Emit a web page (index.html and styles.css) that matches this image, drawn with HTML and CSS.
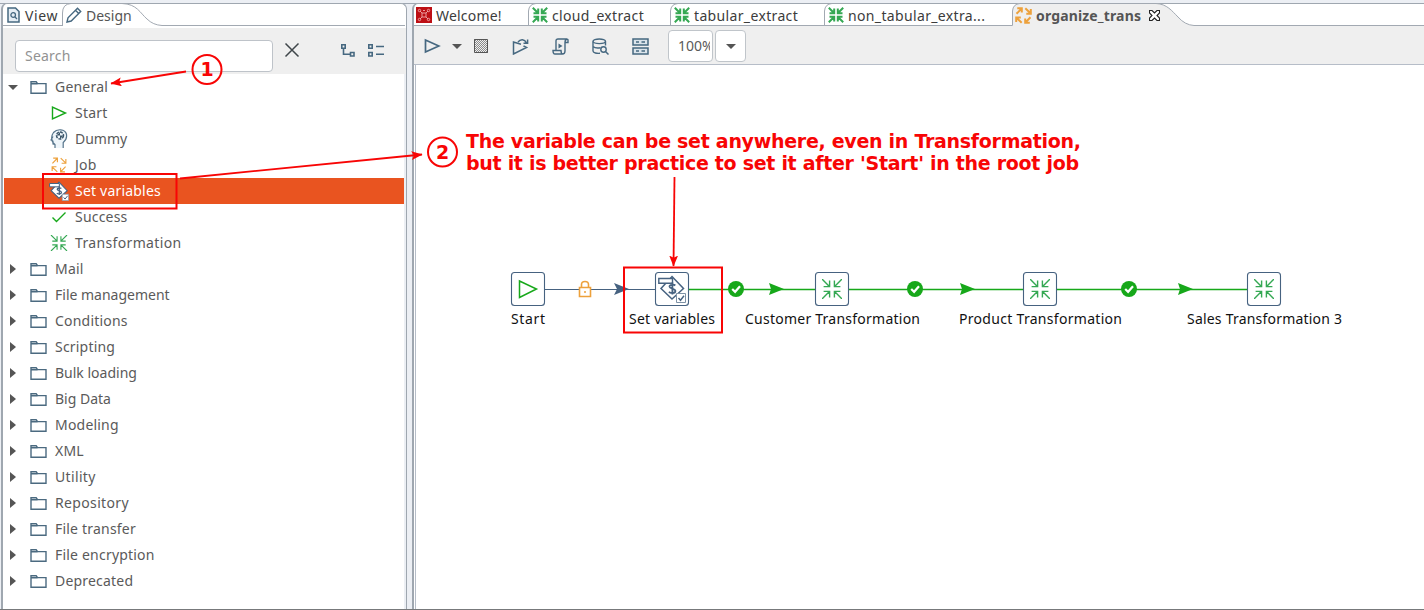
FILE: index.html
```html
<!DOCTYPE html>
<html lang="en">
<head>
<meta charset="utf-8">
<title>organize_trans</title>
<link rel="stylesheet" href="styles.css">
</head>
<body>
<svg class="defs" aria-hidden="true">
  <defs>
    <symbol id="folder" viewBox="0 0 17 15"><path d="M1 13.2V1.8H6.2L7.6 3.6H16V13.2Z M1 3.8H7.6" fill="none" stroke="#4b6a80" stroke-width="1.4"/></symbol>
    <symbol id="play" viewBox="0 0 16 16"><path d="M1.5 2V14L14.5 8Z" fill="none" stroke="currentColor" stroke-width="1.4"/></symbol>
    <symbol id="trans" viewBox="0 0 20 20"><path d="M0 0L7.4 7.4M7.6 1.6V7.6H1.6M20 0L12.6 7.4M12.4 1.6V7.6H18.4M0 20L7.4 12.6M7.6 18.4V12.4H1.6M20 20L12.6 12.6M12.4 18.4V12.4H18.4" fill="none" stroke="currentColor" stroke-width="1.4"/></symbol>
    <symbol id="transbold" viewBox="0 0 16 16"><path d="M.8 .8L5.5 5.5M6.2 1.5V6.2H1.5M15.2 .8L10.5 5.5M9.8 1.5V6.2H14.5M.8 15.2L5.5 10.5M6.2 14.5V9.8H1.5M15.2 15.2L10.5 10.5M9.8 14.5V9.8H14.5" fill="none" stroke="#35a853" stroke-width="2"/></symbol>
    <symbol id="job" viewBox="0 0 17 17"><path d="M1.5 6.8L6.5 1.6M2.3 1.2H6.8V5.6M10.3 1.2L15.5 6.3M15.8 2V6.7H11.3M15.5 10.3L10.4 15.5M14.8 15.8H10.2V11.4M6.7 15.8L1.4 10.7M1.2 15V10.4H5.8" fill="none" stroke="#eda13c" stroke-width="var(--w,1.2)"/></symbol>
    <symbol id="setvar" viewBox="0 0 28 28">
      <path d="M14 1.500L25.500 13.500L14 24L3 13.500Z" fill="#fff" stroke="#466280" stroke-width="1.500"/>
      <path d="M.8 3.500H14.500V8.200H.8Z" fill="#fff" stroke="#466280" stroke-width="1.400"/>
      <path d="M17.300 10.500C16 9.200 11.300 9.500 11.500 11.700C11.800 14 17.400 13.200 17.400 16C17.400 18.800 12 18.500 11 16.800M14.400 7.500V19.500" fill="none" stroke="#466280" stroke-width="1.800"/>
      <path d="M18.500 18.500H27.500V27.500H18.500Z" fill="#fff" stroke="#7d91a5"/><path d="M20.500 23L22.500 25.300L26 20.800" fill="none" stroke="#466280" stroke-width="1.400"/>
    </symbol>
    <symbol id="check" viewBox="0 0 16 16"><circle cx="8" cy="8" r="8" fill="#17a81a"/><path d="M4.2 8L7.1 10.8L12 5.3" fill="none" stroke="#fff" stroke-width="2.2"/></symbol>
    <pattern id="dots" width="2" height="2" patternUnits="userSpaceOnUse"><path d="M0 0H1V1H0ZM1 1H2V2H1Z" fill="#8a8a8a"/></pattern>
    <marker id="head" viewBox="0 0 10 8" refX="9.5" refY="4" markerWidth="11" markerHeight="9" markerUnits="userSpaceOnUse" orient="auto"><path d="M0 0L10 4L0 8L2 4Z" fill="#f80505"/></marker>
  </defs>
</svg>
<div class="app">
  <section class="panel side">
    <div class="tabs">
      <svg class="curve" width="402" height="23"><path d="M59.5 23V10Q59.5 1 68 .5H119C134 1 137 10 144 16Q150 22 159 22.5H402M59.5 22.5H0" fill="none" stroke="#a2a9b2"/></svg>
      <div class="tab view"><svg width="13" height="16" viewBox="0 0 13 16"><path d="M1 1H8.5L12 4.500V15H1Z" fill="#e5edf4" stroke="#466880" stroke-width="1.5"/><circle cx="6.200" cy="8" r="2.300" fill="none" stroke="#466880" stroke-width="1.300"/><path d="M8 10L10 12" stroke="#466880" stroke-width="1.300"/></svg><span>View</span></div>
      <div class="tab design"><svg width="16" height="16" viewBox="0 0 16 16"><path d="M1 15L2 10.800L11.500 1.200L14.700 4.400L5.200 14ZM9.500 3.200L12.700 6.400" fill="none" stroke="#466880" stroke-width="1.400"/></svg><span>Design</span></div>
    </div>
    <div class="search-row">
      <div class="search">Search</div>
      <svg class="clear" width="16" height="16" viewBox="0 0 16 16"><path d="M1.500 1.500L14.500 14.500M14.500 1.500L1.500 14.500" stroke="#3f464a" stroke-width="1.500"/></svg>
      <svg class="expand" width="14" height="13" viewBox="0 0 14 13"><path d="M.8 .8H4.200V4.200H.8ZM9.500 8.500H13V12H9.500ZM2.500 4.500V10.300H9" fill="none" stroke="#466880" stroke-width="1.600"/></svg>
      <svg class="collapse" width="16" height="13" viewBox="0 0 16 13"><path d="M.8 .8H4.200V4.200H.8ZM.8 8.500H4.200V12H.8ZM8 2.500H16M8 10.300H16" fill="none" stroke="#466880" stroke-width="1.600"/></svg>
    </div>
    <div class="tree">
      <div class="row"><i class="tri open"></i><svg class="folder"><use href="#folder"/></svg><span>General</span></div>
      <div class="row child"><svg class="ic green"><use href="#play"/></svg><span>Start</span></div>
      <div class="row child"><svg class="ic dummy" viewBox="0 0 18 20"><path d="M5 19V15.500C1 13 .8 7 3.500 3.500C7-.5 15-.2 16.400 5C17.500 10 15 12 13.200 13.500V19M5 15.500L3 15V12L1 11L3 7.500" fill="#eef5fa" stroke="#55748b" stroke-width="1.200"/><circle cx="10" cy="6.500" r="3.500" fill="none" stroke="#3c566a" stroke-width="1.500" stroke-dasharray="3 1"/><path d="M10 3V6.500H6.500ZM10 6.500H13.500L10 10Z" fill="#3c566a"/></svg><span class="tight">Dummy</span></div>
      <div class="row child"><svg class="ic"><use href="#job"/></svg><span>Job</span></div>
      <div class="row child selected"><svg class="ic var"><use href="#setvar"/></svg><span>Set variables</span></div>
      <div class="row child"><svg class="ic" viewBox="0 0 16 16"><path d="M1.500 8.500L5.500 12.500L14.500 3.500" fill="none" stroke="#17a81a" stroke-width="1.400"/></svg><span>Success</span></div>
      <div class="row child"><svg class="ic lime"><use href="#trans"/></svg><span class="wide">Transformation</span></div>
      <div class="row"><i class="tri"></i><svg class="folder"><use href="#folder"/></svg><span>Mail</span></div>
      <div class="row"><i class="tri"></i><svg class="folder"><use href="#folder"/></svg><span class="tight">File management</span></div>
      <div class="row"><i class="tri"></i><svg class="folder"><use href="#folder"/></svg><span>Conditions</span></div>
      <div class="row"><i class="tri"></i><svg class="folder"><use href="#folder"/></svg><span>Scripting</span></div>
      <div class="row"><i class="tri"></i><svg class="folder"><use href="#folder"/></svg><span class="tight">Bulk loading</span></div>
      <div class="row"><i class="tri"></i><svg class="folder"><use href="#folder"/></svg><span class="tight">Big Data</span></div>
      <div class="row"><i class="tri"></i><svg class="folder"><use href="#folder"/></svg><span>Modeling</span></div>
      <div class="row"><i class="tri"></i><svg class="folder"><use href="#folder"/></svg><span>XML</span></div>
      <div class="row"><i class="tri"></i><svg class="folder"><use href="#folder"/></svg><span class="wide">Utility</span></div>
      <div class="row"><i class="tri"></i><svg class="folder"><use href="#folder"/></svg><span class="wide">Repository</span></div>
      <div class="row"><i class="tri"></i><svg class="folder"><use href="#folder"/></svg><span>File transfer</span></div>
      <div class="row"><i class="tri"></i><svg class="folder"><use href="#folder"/></svg><span>File encryption</span></div>
      <div class="row"><i class="tri"></i><svg class="folder"><use href="#folder"/></svg><span>Deprecated</span></div>
    </div>
  </section>
  <section class="panel main">
    <div class="tabs">
      <svg class="curve" width="1011" height="23"><path d="M598.500 23V8Q599 1 606 .5H742C753 1 758 8 764 14Q771 22 780 22.500V23Z" fill="#efefef"/><path d="M0 22.500H598.500V8Q599 1 606 .5H742C753 1 758 8 764 14Q771 22 780 22.500H1011M114.500 22V8Q115 1 122 .5M256.500 22V8Q257 1 264 .5M410.500 22V8Q411 1 418 .5" fill="none" stroke="#a2a9b2"/></svg>
      <div class="tab t1"><svg width="16" height="16" viewBox="0 0 16 16"><path d="M0 0H16V16H0Z" fill="#bd0f14"/><path d="M4 4L6 6M12 4L10 6M4 12L6 10M12 12L10 10M6 6H10V10H6ZM7 3.500H9" fill="none" stroke="#efabad" stroke-width=".9"/><g fill="none" stroke="#efabad" stroke-width=".9"><circle cx="3.500" cy="3.500" r="1.200"/><circle cx="12.500" cy="3.500" r="1.200"/><circle cx="3.500" cy="12.500" r="1.200"/><circle cx="12.500" cy="12.500" r="1.200"/></g></svg><span>Welcome!</span></div>
      <div class="tab t2"><svg width="16" height="16"><use href="#transbold"/></svg><span>cloud_extract</span></div>
      <div class="tab t3"><svg width="16" height="16"><use href="#transbold"/></svg><span>tabular_extract</span></div>
      <div class="tab t4"><svg width="16" height="16"><use href="#transbold"/></svg><span>non_tabular_extra...</span></div>
      <div class="tab t5"><svg class="heavy" width="17" height="17"><use href="#job"/></svg><span>organize_trans</span><svg class="close" width="11" height="11" viewBox="0 0 11 11"><path d="M.5 .5H3L5.500 3L8 .5H10.500V3L8 5.500L10.500 8V10.500H8L5.500 8L3 10.500H.5V8L3 5.500L.5 3Z" fill="#fff" stroke="#222" stroke-width="1.100"/></svg></div>
    </div>
    <div class="toolbar">
      <svg class="run" width="17" height="16" viewBox="0 0 17 16"><path d="M1.500 2V14L14.800 8Z" fill="none" stroke="#466880" stroke-width="1.700"/></svg>
      <i class="tri down"></i>
      <svg class="stop" width="14" height="14"><path d="M0 0H14V14H0Z" fill="url(#dots)"/><path d="M.5 .5H13.500V13.500H.5Z" fill="none" stroke="#555"/></svg>
      <svg class="replay" width="17" height="17" viewBox="0 0 17 17"><path d="M9 6.200L1.500 4V16L14.500 9.500L11.500 8M6 4C8.500 .8 12.500 1 14.500 4.800M15.600 1.500V5.300H11.500" fill="none" stroke="#466880" stroke-width="1.500"/></svg>
      <svg class="script" width="17" height="17" viewBox="0 0 17 17"><path d="M4 12V3Q4 1 6 1H15Q13 1.500 13 4.500V13Q13 16 10.500 16H3Q1 16 1 12.500H9Q9 16 11 16M13 4.500H16V2Q16 1 14.500 1" fill="none" stroke="#466880" stroke-width="1.400"/><path d="M6.500 5.500V10.500L10.500 8Z" fill="#466880"/></svg>
      <svg class="database" width="17" height="17" viewBox="0 0 17 17"><path d="M1 3.500V13C1 14.800 5 15.700 8 15.300M13.500 3.500V7.500M1 8.500C3 10.300 6 10.200 8.500 9.700" fill="none" stroke="#466880" stroke-width="1.400"/><ellipse cx="7.250" cy="3.300" rx="6.250" ry="2.300" fill="none" stroke="#466880" stroke-width="1.400"/><circle cx="11.500" cy="11.500" r="2.700" fill="none" stroke="#466880" stroke-width="1.400"/><path d="M13.500 13.500L16.500 16.500" stroke="#466880" stroke-width="1.500"/></svg>
      <svg class="grid" width="17" height="17" viewBox="0 0 17 17"><path d="M1 1H16V7H1ZM1 10H16V16H1Z" fill="#dbe4eb" stroke="#466880" stroke-width="1.500"/><path d="M4 4H7M9.500 4H13M4 13H7M9.500 13H13" stroke="#466880" stroke-width="1.500"/></svg>
      <div class="zoom"><span>100%</span></div><div class="drop"><i class="tri down"></i></div>
    </div>
    <svg class="canvas" width="1009" height="544" viewBox="416 65 1008 544">
      <path d="M545 289.500H655" stroke="#466280" stroke-width="1.200"/>
      <path d="M689 289.500H815M849 289.500H1023M1057 289.500H1247" stroke="#17a81a" stroke-width="1.400"/>
      <g fill="#fff" stroke="#466280" stroke-width="1.100"><rect x="511.500" y="272.500" width="33" height="33" rx="3"/><rect x="655.500" y="272.500" width="33" height="33" rx="3"/><rect x="815.500" y="272.500" width="33" height="33" rx="3"/><rect x="1023.500" y="272.500" width="33" height="33" rx="3"/><rect x="1247.500" y="272.500" width="33" height="33" rx="3"/></g>
      <path d="M519.500 281V297.500L536.500 289Z" fill="none" stroke="#17a81a" stroke-width="1.500"/>
      <use href="#setvar" x="658" y="275" width="28" height="28"/>
      <g color="#35a853"><use href="#trans" x="822" y="279" width="20" height="20"/><use href="#trans" x="1030" y="279" width="20" height="20"/><use href="#trans" x="1254" y="279" width="20" height="20"/></g>
      <use href="#check" x="728" y="281" width="16" height="16"/><use href="#check" x="907" y="281" width="16" height="16"/><use href="#check" x="1121" y="281" width="16" height="16"/>
      <path d="M614 283L629 289L614 295L617 289Z" fill="#466280"/>
      <path d="M769 283L784 289L769 295L771 289ZM960 283L975 289L960 295L962 289ZM1178 283L1193 289L1178 295L1180 289Z" fill="#17a81a"/>
      <path d="M579.500 287.500H590.500V296.500H579.500ZM581.500 287V284.500Q581.500 281.500 585 281.500T588.500 284.500V287" fill="#fff" stroke="#eda13c" stroke-width="1.600"/><circle cx="585" cy="292" r="1" fill="#eda13c"/>
      <g class="names"><text x="511" y="324" textLength="34">Start</text><text x="629" y="324" textLength="86">Set variables</text><text x="745" y="324" textLength="175">Customer Transformation</text><text x="959" y="324" textLength="163">Product Transformation</text><text x="1187" y="324" textLength="155">Sales Transformation 3</text></g>
    </svg>
  </section>
  <svg class="notes" width="1424" height="610">
    <g fill="none" stroke="#f80505" stroke-width="2"><rect x="43" y="174" width="133.500" height="34.500"/><rect x="624" y="267.500" width="98" height="65"/><circle cx="207" cy="69.500" r="14.500"/><circle cx="442.500" cy="152" r="14.500"/></g>
    <g stroke="#f80505" stroke-width="1.800"><path d="M186 71.500L111 83.500" marker-end="url(#head)"/><path d="M180 178.500L422 154.500" marker-end="url(#head)"/><path d="M674.500 177L673.500 266" marker-end="url(#head)"/></g>
    <g class="num"><text x="207" y="76" text-anchor="middle">1</text><text x="442.500" y="159" text-anchor="middle">2</text></g>
    <g class="msg"><text x="466" y="148" textLength="615">The variable can be set anywhere, even in Transformation,</text><text x="466" y="170" textLength="613">but it is better practice to set it after 'Start' in the root job</text></g>
  </svg>
</div>
</body>
</html>
```
FILE: styles.css
```css
* { box-sizing: border-box; }
body { margin: 0; background: #eceff4; font: 14px/20px "Noto Sans", sans-serif; color: #5a5a5a; overflow: hidden; }
svg { display: block; flex: none; }
.defs { position: absolute; width: 0; height: 0; }
.app { position: relative; width: 1424px; height: 610px; padding: 3px 0 0 1px; display: flex; gap: 5px; background: linear-gradient(#9ea6b1, #9ea6b1) 0 3px / 100% 1px no-repeat #eceff4; border-bottom: 1px solid #77797b; }
.panel { display: flex; flex-direction: column; border: 1px solid #9fa7b0; border-bottom: 0; border-radius: 6px 6px 0 0; background: #fff; }
.side { width: 406px; border-left-width: 2px; }
.main { flex: 1; border-left-width: 2px; border-right: 0; border-radius: 6px 0 0 0; }
.tabs { position: relative; height: 22px; display: flex; flex: none; }
.curve { position: absolute; left: 0; top: -1px; }
.tab { position: relative; display: flex; align-items: center; height: 22px; gap: 5px; color: #3c3c3c; white-space: nowrap; flex: none; letter-spacing: .35px; }
.tab span { padding-top: 2px; }
.view { width: 60px; padding-left: 4px; letter-spacing: .6px; }
.design { padding-left: 3px; gap: 4px; color: #555; letter-spacing: 0; }
.t1 { width: 117px; padding-left: 2px; gap: 4px; letter-spacing: .2px; }
.t2 { width: 142px; gap: 5px; padding-left: 1px; gap: 4px; }
.t3 { width: 154px; padding-left: 1px; gap: 4px; }
.t4 { width: 187px; padding-left: 1px; gap: 4px; }
.t5 { font-weight: 700; padding-left: 1px; gap: 4px; color: #555; letter-spacing: .15px; }
.heavy { --w: 2; }
.close { margin-left: 4px; }
.search-row { display: flex; align-items: flex-start; height: 48px; padding: 14px 0 0 12px; background: #efefef; border-top: 2px solid #fff; }
.search { width: 258px; height: 32px; margin-top: -2px; border: 1px solid #bec3c9; border-radius: 4px; background: #fff; padding: 5px 9px; color: #929292; letter-spacing: .2px; }
.clear { margin-left: 11px; }
.expand { margin: 2px 0 0 41px; }
.collapse { margin: 2px 0 0 13px; }
.tree { flex: 1; padding: 0 2px 0 1px; background: linear-gradient(#eceff4, #eceff4) right / 2px 100% no-repeat #fff; letter-spacing: .2px; }
.wide { letter-spacing: .35px; }
.tight { letter-spacing: 0; }
.row { display: flex; align-items: center; height: 26px; padding-left: 5px; }
.tri { width: 0; height: 0; border: solid transparent; border-width: 5px 0 5px 6px; border-left-color: #555; margin: 0 14px 0 1px; flex: none; }
.tri.open, .tri.down { border-width: 5px 5px 0; border-color: #555 transparent transparent; margin: 0 12px 0 -1px; }
.folder { width: 17px; height: 15px; margin-right: 8px; }
.child { padding-left: 46px; }
.ic { width: 18px; height: 16px; margin-right: 7px; }
.dummy { height: 20px; }
.green { color: #17a81a; }
.lime { color: #35a853; }
.var { width: 20px; height: 20px; margin: 0 6px 0 -1px; }
.selected { background: #e95420; color: #fff; }
.toolbar { height: 39px; flex: none; display: flex; align-items: center; padding: 2px 0 0 10px; background: #efefef; border-bottom: 1px solid #b6bdc8; }
.toolbar .tri { margin: 0; }
.stop { margin-left: 12px; }
.run { margin-right: 11px; }
.replay { margin-left: 24px; }
.script { margin-left: 23px; }
.database { margin-left: 23px; }
.grid { margin-left: 23px; }
.zoom { width: 45px; height: 32px; margin-left: 19px; padding: 5px 2px 0 9px; border: 1px solid #c0c5ca; border-radius: 4px; background: #fff; }
.zoom span { display: block; overflow: hidden; }
.drop { width: 31px; height: 32px; margin-left: 2px; display: grid; place-items: center; border: 1px solid #c0c5ca; border-radius: 4px; background: #fff; }
.canvas { margin-left: 1px; border-left: 1px solid #b6bdc8; }
.names { font: 14px "Noto Sans", sans-serif; fill: #111; }
.notes { position: absolute; left: 0; top: 0; pointer-events: none; }
.num, .msg { font: bold 19px "DejaVu Sans", sans-serif; fill: #f80505; }
```
